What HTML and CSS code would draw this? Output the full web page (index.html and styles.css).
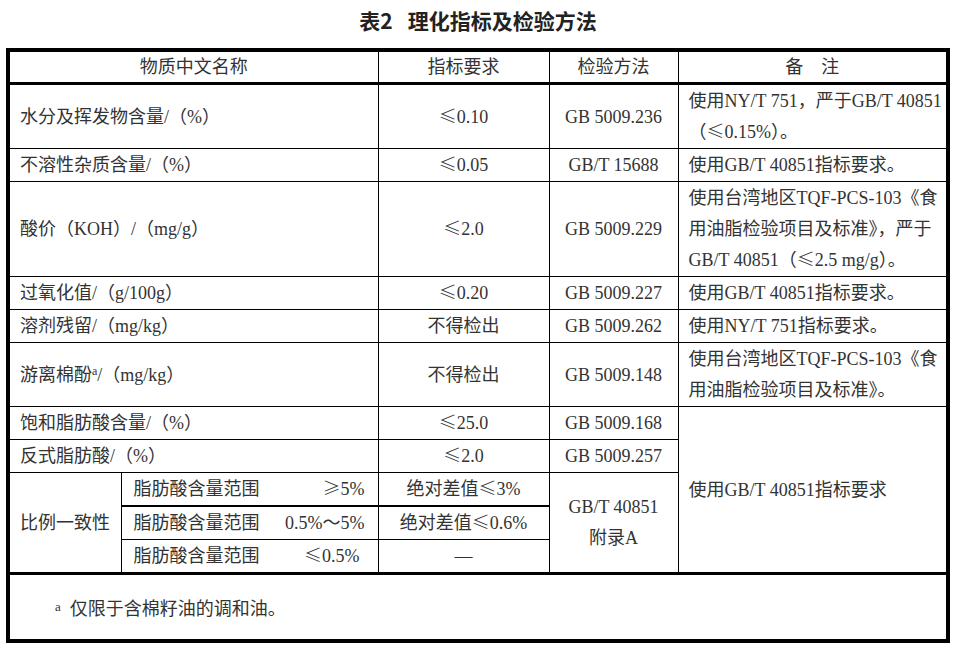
FILE: index.html
```html
<!DOCTYPE html>
<html lang="zh-CN">
<head>
<meta charset="utf-8">
<title>表2 理化指标及检验方法</title>
<link rel="stylesheet" href="styles.css">
</head>
<body>
<div class="sheet">
  <h1 class="title"><span class="title-no">表2</span>理化指标及检验方法</h1>
  <div class="box">
    <table class="grid">
      <colgroup>
        <col class="w-a"><col class="w-b"><col class="w-c"><col class="w-d"><col class="w-e">
      </colgroup>
      <thead>
        <tr>
          <th colspan="2">物质中文名称</th>
          <th>指标要求</th>
          <th>检验方法</th>
          <th>备　注</th>
        </tr>
      </thead>
      <tbody>
        <tr>
          <td colspan="2" class="l">水分及挥发物含量/（%）</td>
          <td class="c"><span class="sym">≤</span>0.10</td>
          <td class="c">GB 5009.236</td>
          <td class="l">使用NY/T 751，严于GB/T 40851<br>（<span class="sym">≤</span>0.15%）。</td>
        </tr>
        <tr>
          <td colspan="2" class="l">不溶性杂质含量/（%）</td>
          <td class="c"><span class="sym">≤</span>0.05</td>
          <td class="c">GB/T 15688</td>
          <td class="l">使用GB/T 40851指标要求。</td>
        </tr>
        <tr>
          <td colspan="2" class="l">酸价（KOH）/（mg/g）</td>
          <td class="c"><span class="sym">≤</span>2.0</td>
          <td class="c">GB 5009.229</td>
          <td class="l">使用台湾地区TQF-PCS-103《食<br>用油脂检验项目及标准》，严于<br>GB/T 40851（<span class="sym">≤</span>2.5 mg/g）。</td>
        </tr>
        <tr>
          <td colspan="2" class="l">过氧化值/（g/100g）</td>
          <td class="c"><span class="sym">≤</span>0.20</td>
          <td class="c">GB 5009.227</td>
          <td class="l">使用GB/T 40851指标要求。</td>
        </tr>
        <tr>
          <td colspan="2" class="l">溶剂残留/（mg/kg）</td>
          <td class="c">不得检出</td>
          <td class="c">GB 5009.262</td>
          <td class="l">使用NY/T 751指标要求。</td>
        </tr>
        <tr>
          <td colspan="2" class="l">游离棉酚<sup>a</sup>/（mg/kg）</td>
          <td class="c">不得检出</td>
          <td class="c">GB 5009.148</td>
          <td class="l">使用台湾地区TQF-PCS-103《食<br>用油脂检验项目及标准》。</td>
        </tr>
        <tr>
          <td colspan="2" class="l">饱和脂肪酸含量/（%）</td>
          <td class="c"><span class="sym">≤</span>25.0</td>
          <td class="c">GB 5009.168</td>
          <td class="l" rowspan="5">使用GB/T 40851指标要求</td>
        </tr>
        <tr>
          <td colspan="2" class="l">反式脂肪酸/（%）</td>
          <td class="c"><span class="sym">≤</span>2.0</td>
          <td class="c">GB 5009.257</td>
        </tr>
        <tr class="sub-first">
          <td class="l" rowspan="3">比例一致性</td>
          <td class="sub"><div class="split"><span>脂肪酸含量范围</span><span><span class="sym">≥</span>5%</span></div></td>
          <td class="c sub">绝对差值<span class="sym">≤</span>3%</td>
          <td class="c" rowspan="3">GB/T 40851<br>附录A</td>
        </tr>
        <tr>
          <td class="sub"><div class="split"><span>脂肪酸含量范围</span><span>0.5%～5%</span></div></td>
          <td class="c sub">绝对差值<span class="sym">≤</span>0.6%</td>
        </tr>
        <tr class="sub-last">
          <td class="sub"><div class="split"><span>脂肪酸含量范围</span><span class="pr"><span class="sym">≤</span>0.5%</span></div></td>
          <td class="c sub">—</td>
        </tr>
      </tbody>
    </table>
    <div class="note"><sup>a</sup>仅限于含棉籽油的调和油。</div>
  </div>
</div>
</body>
</html>
```

FILE: styles.css
```css
html, body {
  margin: 0;
  padding: 0;
  background: #ffffff;
}

.sheet {
  width: 944px;
  margin-left: 6px;
  font-family: "Liberation Serif", "Noto Sans CJK SC", serif;
  font-size: 18px;
  color: #333333;
}

.title {
  margin: 0;
  height: 48px;
  line-height: 40px;
  text-align: center;
  font-family: "Noto Sans CJK SC", sans-serif;
  font-size: 21px;
  font-weight: 700;
  color: #222222;
}

.title-no {
  margin-right: 15px;
}

.box {
  border: 4px solid #000000;
  box-sizing: border-box;
  width: 944px;
}

.grid {
  width: 936px;
  border-collapse: collapse;
  border-style: hidden;
  table-layout: fixed;
}

.w-a { width: 111px; }
.w-b { width: 257px; }
.w-c { width: 171px; }
.w-d { width: 129px; }
.w-e { width: 268px; }

.grid th,
.grid td {
  border: 1px solid #000000;
  padding: 1px 10px 0 10px;
  line-height: 31px;
  font-weight: 400;
  vertical-align: middle;
  white-space: nowrap;
}

.grid th {
  height: 29px;
  padding: 0;
  line-height: 30px;
  text-align: center;
  border-bottom: 3px solid #000000;
}

.grid td.l { text-align: left; }
.grid td.c { text-align: center; }

.grid td.sub { padding-left: 12px; padding-right: 13px; }
.grid td.c.sub { padding-left: 4px; padding-right: 4px; }

.sub-first td.sub { border-bottom-width: 2px; }

.sub-last td { border-bottom: 0; }

.sym {
  font-family: "Noto Sans CJK SC", sans-serif;
  font-weight: 300;
  line-height: 0;
}

.split {
  display: flex;
  justify-content: space-between;
}

.split .pr { margin-right: 5px; }

sup {
  font-size: 12px;
  line-height: 0;
  vertical-align: 6px;
}

.note {
  border-top: 3px solid #000000;
  height: 64px;
  padding-left: 45px;
  display: flex;
  align-items: center;
}

.note sup {
  font-size: 13px;
  margin-right: 9px;
}
```
